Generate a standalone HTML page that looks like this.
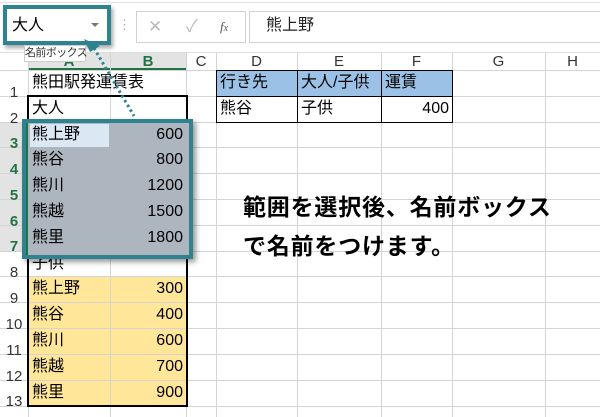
<!DOCTYPE html>
<html><head><meta charset="utf-8"><style>
*{margin:0;padding:0;box-sizing:border-box}
body{width:600px;height:417px;overflow:hidden;background:#fff;position:relative;font-family:"Liberation Sans","Noto Sans CJK JP",sans-serif;color:#000}
.a{position:absolute}
.h{position:absolute;height:1px;background:#d4d4d4}
.v{position:absolute;width:1px;background:#d4d4d4}
.t{position:absolute;font-size:16px;line-height:26px;white-space:nowrap}
.r{text-align:right}
.rn{position:absolute;left:0;width:28px;text-align:center;font-size:15px;line-height:26px;color:#333}
.ch{position:absolute;top:53px;height:17px;text-align:center;font-size:15px;line-height:17px;color:#333}
</style></head><body>
<div class="h" style="top:2px;left:0;width:600px;background:#e0e0e0"></div>
<div class="a" style="left:136px;top:11px;width:110px;height:32px;border:1px solid #d0d0d0"></div>
<div class="a" style="left:249px;top:11px;width:360px;height:32px;border:1px solid #d0d0d0"></div>
<div class="t" style="left:148px;top:14px;color:#bbb;font-size:17px">✕</div>
<div class="t" style="left:186px;top:14px;color:#bbb;font-size:17px">✓</div>
<div class="t" style="left:220px;top:14px;color:#555;font-size:13px;font-style:italic;font-family:'Liberation Serif',serif">f<span style="font-size:10px">x</span></div>
<div class="t" style="left:118px;top:12px;color:#aaa;font-size:13px">⋮</div>
<div class="t" style="left:266px;top:13px;font-size:16px;color:#222">熊上野</div>
<div class="a" style="left:3px;top:5px;width:108px;height:40px;border:4px solid #2f8391;background:#fff;box-shadow:2px 3px 4px rgba(0,0,0,.35)"></div>
<div class="t" style="left:12px;top:13px;font-size:16px">大人</div>
<div class="a" style="left:91px;top:23px;border-left:4px solid transparent;border-right:4px solid transparent;border-top:4px solid #777"></div>
<div class="a" style="left:28px;top:53px;width:158px;height:17px;background:#e3e3e3;border-bottom:2px solid #217346"></div>
<div class="h" style="top:52px;left:0;width:600px;background:#ddd"></div>
<div class="ch" style="left:28px;width:82px;color:#217346;font-weight:bold">A</div>
<div class="ch" style="left:110px;width:76px;color:#217346;font-weight:bold">B</div>
<div class="ch" style="left:186px;width:30px">C</div>
<div class="ch" style="left:216px;width:81px">D</div>
<div class="ch" style="left:297px;width:84px">E</div>
<div class="ch" style="left:381px;width:71px">F</div>
<div class="ch" style="left:452px;width:93px">G</div>
<div class="ch" style="left:545px;width:55px">H</div>
<div class="a" style="left:0;top:122px;width:28px;height:129px;background:#e3e3e3"></div>
<div class="a" style="left:216px;top:70px;width:236px;height:26px;background:#9bc2e6"></div>
<div class="a" style="left:28px;top:276px;width:158px;height:130px;background:#ffe699"></div>
<div class="h" style="top:70px;left:0;width:600px"></div>
<div class="h" style="top:96px;left:0;width:600px"></div>
<div class="h" style="top:122px;left:0;width:600px"></div>
<div class="h" style="top:147px;left:0;width:600px"></div>
<div class="h" style="top:173px;left:0;width:600px"></div>
<div class="h" style="top:199px;left:0;width:600px"></div>
<div class="h" style="top:225px;left:0;width:600px"></div>
<div class="h" style="top:251px;left:0;width:600px"></div>
<div class="h" style="top:276px;left:0;width:600px"></div>
<div class="h" style="top:302px;left:0;width:600px"></div>
<div class="h" style="top:328px;left:0;width:600px"></div>
<div class="h" style="top:354px;left:0;width:600px"></div>
<div class="h" style="top:380px;left:0;width:600px"></div>
<div class="h" style="top:406px;left:0;width:600px"></div>
<div class="v" style="left:28px;top:53px;height:364px"></div>
<div class="v" style="left:110px;top:53px;height:364px"></div>
<div class="v" style="left:186px;top:53px;height:364px"></div>
<div class="v" style="left:216px;top:53px;height:364px"></div>
<div class="v" style="left:297px;top:53px;height:364px"></div>
<div class="v" style="left:381px;top:53px;height:364px"></div>
<div class="v" style="left:452px;top:53px;height:364px"></div>
<div class="v" style="left:545px;top:53px;height:364px"></div>
<div class="a" style="left:216px;top:70px;width:237px;height:53px;border:1px solid #000"></div>
<div class="a" style="left:216px;top:96px;width:237px;height:1px;background:#000"></div>
<div class="a" style="left:297px;top:70px;width:1px;height:53px;background:#000"></div>
<div class="a" style="left:381px;top:70px;width:1px;height:53px;background:#000"></div>
<div class="a" style="left:27px;top:95px;width:161px;height:312px;border:2px solid #000"></div>
<div class="rn" style="top:80px">1</div>
<div class="rn" style="top:106px">2</div>
<div class="rn" style="top:131px;color:#217346;font-weight:bold">3</div>
<div class="rn" style="top:157px;color:#217346;font-weight:bold">4</div>
<div class="rn" style="top:183px;color:#217346;font-weight:bold">5</div>
<div class="rn" style="top:209px;color:#217346;font-weight:bold">6</div>
<div class="rn" style="top:234px;color:#217346;font-weight:bold">7</div>
<div class="rn" style="top:260px">8</div>
<div class="rn" style="top:286px">9</div>
<div class="rn" style="top:312px">10</div>
<div class="rn" style="top:338px">11</div>
<div class="rn" style="top:364px">12</div>
<div class="rn" style="top:389px">13</div>
<div class="t" style="left:32px;top:70px">熊田駅発運賃表</div>
<div class="t" style="left:32px;top:96px">大人</div>
<div class="t" style="left:32px;top:251px">子供</div>
<div class="t" style="left:220px;top:70px">行き先</div>
<div class="t" style="left:301px;top:70px">大人/子供</div>
<div class="t" style="left:385px;top:70px">運賃</div>
<div class="t" style="left:220px;top:96px">熊谷</div>
<div class="t" style="left:301px;top:96px">子供</div>
<div class="t r" style="left:381px;width:68px;top:96px">400</div>
<div class="t" style="left:32px;top:276px">熊上野</div><div class="t r" style="left:110px;width:73px;top:276px">300</div>
<div class="t" style="left:32px;top:302px">熊谷</div><div class="t r" style="left:110px;width:73px;top:302px">400</div>
<div class="t" style="left:32px;top:328px">熊川</div><div class="t r" style="left:110px;width:73px;top:328px">600</div>
<div class="t" style="left:32px;top:354px">熊越</div><div class="t r" style="left:110px;width:73px;top:354px">700</div>
<div class="t" style="left:32px;top:380px">熊里</div><div class="t r" style="left:110px;width:73px;top:380px">900</div>
<div class="a" style="left:22px;top:119px;width:171px;height:140px;border:4px solid #2f8391;box-shadow:3px 3px 5px rgba(0,0,0,.4)"></div>
<div class="a" style="left:26px;top:123px;width:163px;height:132px;background:#adb5bf"></div>
<div class="a" style="left:30px;top:124px;width:79px;height:23px;background:#dbe8f4"></div>
<div class="a" style="left:26px;top:123px;width:2px;height:132px;background:#217346"></div>
<div class="t" style="left:32px;top:122px">熊上野</div><div class="t r" style="left:110px;width:73px;top:122px">600</div>
<div class="t" style="left:32px;top:147px">熊谷</div><div class="t r" style="left:110px;width:73px;top:147px">800</div>
<div class="t" style="left:32px;top:173px">熊川</div><div class="t r" style="left:110px;width:73px;top:173px">1200</div>
<div class="t" style="left:32px;top:199px">熊越</div><div class="t r" style="left:110px;width:73px;top:199px">1500</div>
<div class="t" style="left:32px;top:225px">熊里</div><div class="t r" style="left:110px;width:73px;top:225px">1800</div>
<div class="a" style="left:24px;top:45px;width:62px;height:17px;background:#fff;border:1px solid #ccc;font-size:11px;line-height:15px;text-align:center;color:#333;letter-spacing:-0.6px;white-space:nowrap;overflow:visible">名前ボックス</div>
<svg class="a" style="left:0;top:0" width="600" height="417">
<line x1="94" y1="48" x2="134" y2="116" stroke="#2f8391" stroke-width="3" stroke-dasharray="2.5 3"/>
<polygon points="84,39 100,46 90,52" fill="#2f8391"/>
</svg>
<div class="t" style="left:243px;top:192px;font-size:23px;line-height:30px;font-weight:bold;letter-spacing:0.8px">範囲を選択後、名前ボックス</div>
<div class="t" style="left:243px;top:231px;font-size:23px;line-height:30px;font-weight:bold;letter-spacing:0.8px">で名前をつけます。</div>
</body></html>
